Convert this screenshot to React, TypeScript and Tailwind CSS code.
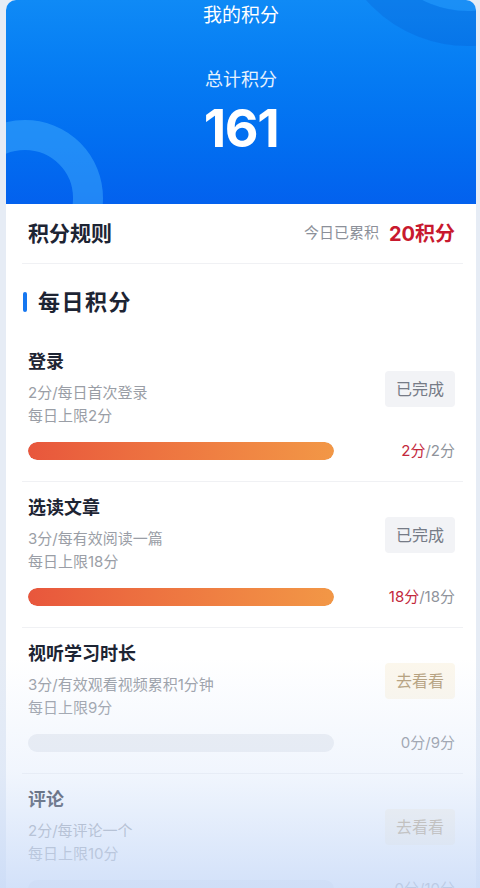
import React from "react";

type Task = {
  title: string;
  desc: string;
  limit: string;
  got: number;
  max: number;
  done: boolean;
};

const tasks: Task[] = [
  { title: "登录", desc: "2分/每日首次登录", limit: "每日上限2分", got: 2, max: 2, done: true },
  { title: "选读文章", desc: "3分/每有效阅读一篇", limit: "每日上限18分", got: 18, max: 18, done: true },
  { title: "视听学习时长", desc: "3分/有效观看视频累积1分钟", limit: "每日上限9分", got: 0, max: 9, done: false },
  { title: "评论", desc: "2分/每评论一个", limit: "每日上限10分", got: 0, max: 10, done: false },
];

function TaskRow({ task }: { task: Task }) {
  const pct = task.max ? (task.got / task.max) * 100 : 0;
  return (
    <div className="border-b border-[#f0f1f4] pt-[14px] pb-[20px]">
      <div className="flex items-center pl-[6px] pr-[8px]">
        <div className="flex-1">
          <div className="text-[18px] leading-[24px] font-bold text-[#1d2433]">{task.title}</div>
          <div className="mt-[7px] text-[15px] leading-[23px] text-[#9a9ea6]">{task.desc}</div>
          <div className="text-[15px] leading-[23px] text-[#9a9ea6]">{task.limit}</div>
        </div>
        {task.done ? (
          <div className="w-[70px] h-[36px] rounded-[4px] bg-[#f2f3f6] flex items-center justify-center text-[16px] text-[#767b86]">
            已完成
          </div>
        ) : (
          <div className="w-[70px] h-[36px] rounded-[4px] bg-[#fcf7ec] flex items-center justify-center text-[16px] text-[#b59f7b]">
            去看看
          </div>
        )}
      </div>
      <div className="mt-[14px] flex items-center pl-[6px] pr-[8px]">
        <div className="w-[306px] h-[18px] rounded-full bg-[#eceef2] overflow-hidden">
          <div
            className="h-full rounded-full bg-gradient-to-r from-[#e8563c] to-[#f29746]"
            style={{ width: `${pct}%` }}
          />
        </div>
        <div className="ml-auto text-[15px] leading-[20px] text-[#8f939b]">
          <span className={task.got > 0 ? "text-[#c3283c]" : ""}>{task.got}分</span>/{task.max}分
        </div>
      </div>
    </div>
  );
}

export default function App() {
  return (
    <div
      className="relative h-[888px] w-[480px] overflow-hidden bg-[#e6ecf5]"
      style={{ fontFamily: '"Inter", "Noto Sans CJK SC", sans-serif' }}
    >
      <div className="mx-[6px] mr-[4px] h-full rounded-t-[10px] bg-white overflow-hidden">
        {/* Header */}
        <div className="relative h-[204px] bg-gradient-to-b from-[#0f8af6] to-[#0361ee] overflow-hidden">
          <svg className="absolute inset-0" width="470" height="204" viewBox="0 0 470 204">
            <circle cx="462" cy="-90" r="101" fill="rgba(255,255,255,0.05)" />
            <circle cx="462" cy="-90" r="118.5" fill="none" stroke="rgba(0,50,170,0.14)" strokeWidth="35" />
            <circle cx="19" cy="198" r="63" fill="none" stroke="rgba(70,180,255,0.45)" strokeWidth="30" />
          </svg>
          <div className="relative flex flex-col items-center text-white">
            <div className="text-[19px] leading-[32px]">我的积分</div>
            <div className="mt-[35px] text-[18px] leading-[26px] text-white/90">总计积分</div>
            <div className="mt-[6px] text-[52px] leading-[60px] font-bold tracking-tight">161</div>
          </div>
        </div>

        {/* Rules */}
        <div className="ml-[16px] mr-[13px]">
          <div className="h-[60px] flex items-center border-b border-[#f0f1f4] pl-[6px] pr-[8px]">
            <div className="text-[21px] font-bold text-[#1d2433]">积分规则</div>
            <div className="ml-auto flex items-center gap-[10px]">
              <span className="text-[15px] text-[#8c9099]">今日已累积</span>
              <span className="text-[20px] font-bold text-[#c8192e]">20积分</span>
            </div>
          </div>

          <div className="mt-[23px] flex items-center">
            <div className="w-[4px] h-[20px] rounded-full bg-[#1677f0] ml-[1px]" />
            <div className="ml-[11px] text-[22px] leading-[30px] font-bold tracking-[1.5px] text-[#1d2433]">每日积分</div>
          </div>

          <div className="mt-[19px]">
            {tasks.map((t) => (
              <TaskRow key={t.title} task={t} />
            ))}
          </div>
        </div>
      </div>

      {/* bottom fade */}
      <div className="pointer-events-none absolute left-0 right-0 bottom-0 h-[230px] bg-gradient-to-b from-[rgba(214,228,250,0)] via-[rgba(214,228,250,0.35)] to-[rgba(200,218,248,0.8)]" />
    </div>
  );
}
